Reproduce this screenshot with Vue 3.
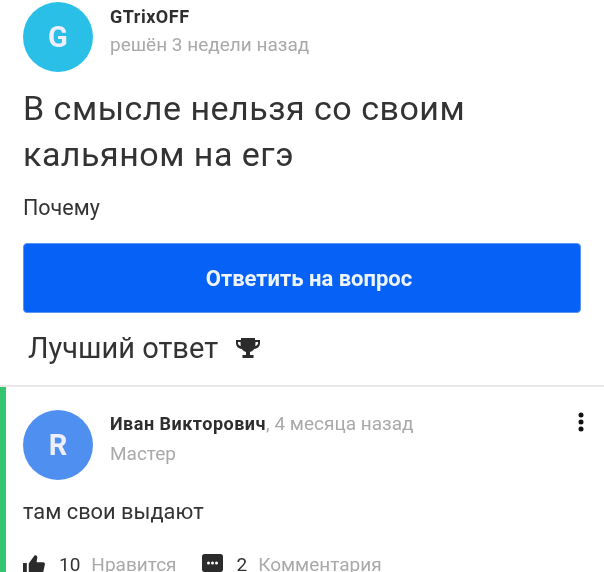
<template>
  <div class="page">
    <section class="question">
      <header class="author">
        <div class="avatar cyan">G</div>
        <div class="meta">
          <div class="name small">GTrixOFF</div>
          <div class="muted">решён 3 недели назад</div>
        </div>
      </header>
      <h1>В смысле нельзя со своим кальяном на егэ</h1>
      <p class="detail">Почему</p>
      <button class="answer-btn">Ответить на вопрос</button>
      <h2>
        Лучший ответ
        <svg class="trophy" width="26" height="22" viewBox="0 0 26 22">
          <path fill="#2b2b2b" d="M6 1h14v2h5v3c0 3-2 5.500-5.800 6-1 1.500-2.700 2.600-4.200 2.900V18h3.500v3h-11v-3H11v-3.100C9.500 14.600 7.800 13.500 6.800 12 3 11.500 1 9 1 6V3h5zM3 5v1c0 1.200.7 2.300 2.800 3C5.600 8 5.500 6.500 5.500 5zm20 0h-2.500c0 1.500-.1 3-.3 4 2.100-.7 2.800-1.800 2.800-3z" />
        </svg>
      </h2>
    </section>

    <section class="best">
      <div class="author">
        <div class="avatar blue">R</div>
        <div class="meta">
          <div class="line"><span class="name">Иван Викторович</span><span class="muted">, 4 месяца назад</span></div>
          <div class="muted rank">Мастер</div>
        </div>
        <svg class="dots" width="8" height="20" viewBox="0 0 8 20">
          <circle v-for="cy in [3, 10, 17]" :key="cy" cx="4" :cy="cy" r="2.500" fill="#111" />
        </svg>
      </div>
      <p class="text">там свои выдают</p>
      <div class="actions">
        <svg class="icon" width="22" height="22" viewBox="0 0 23 22">
          <path fill="#2b2b2b" d="M0 9h4v13H0zM6 9.500 12 1c1.500-.6 3 .3 3 2l-.8 5H21c1.300 0 2.200 1.200 1.900 2.500l-2 9c-.3 1-1 1.500-2 1.500H8c-1.200 0-2-.8-2-2z" />
        </svg>
        <span class="count">10</span>
        <span class="muted action-label">Нравится</span>
        <svg class="icon comment" width="21" height="22" viewBox="0 0 21 22">
          <path fill="#2b2b2b" d="M2.500 0h16C20 0 21 1 21 2.500v13c0 1.500-1 2.500-2.500 2.500H17v4l-5-4H2.500C1 18 0 17 0 15.500v-13C0 1 1 0 2.500 0z" />
          <circle v-for="cx in [6.500, 10.500, 14.500]" :key="cx" :cx="cx" cy="9" r="1.500" fill="#fff" />
        </svg>
        <span class="count">2</span>
        <span class="muted action-label">Комментария</span>
      </div>
    </section>
  </div>
</template>

<script setup>
</script>

<style>
html,
body {
  margin: 0;
  background: #fff;
  overflow: hidden;
}
</style>

<style scoped>
.page {
  width: 604px;
  height: 572px;
  overflow: hidden;
  font-family: Roboto, "Liberation Sans", sans-serif;
  color: #333;
  filter: blur(0.4px);
}

.question {
  padding: 2px 23px 0;
  border-bottom: 2px solid #e8e8e8;
  height: 383px;
}

.author {
  display: flex;
  align-items: flex-start;
  gap: 17px;
}

.avatar {
  width: 70px;
  height: 70px;
  border-radius: 50%;
  flex: none;
  display: flex;
  align-items: center;
  justify-content: center;
  color: #eef;
  font-size: 29px;
  font-weight: 700;
}

.cyan {
  background: #29bfe6;
}

.blue {
  background: #4f8ff0;
}

.meta {
  flex: 1;
  padding-top: 5px;
}

.name {
  font-size: 18px;
  font-weight: 700;
  letter-spacing: 0.5px;
  color: #2e2e2e;
}

.small {
  line-height: 20px;
}

.muted {
  font-size: 19px;
  color: #a9a9a9;
}

.meta > .muted {
  margin-top: 6px;
  line-height: 24px;
}

h1 {
  margin: 13px 0 0;
  width: 480px;
  font-size: 34px;
  font-weight: 400;
  letter-spacing: 0.5px;
  line-height: 46px;
}

.detail {
  margin: 18px 0 0;
  font-size: 21.500px;
  line-height: 26px;
}

.answer-btn {
  display: block;
  width: 100%;
  height: 70px;
  margin-top: 22px;
  padding-left: 20px;
  border: 1px solid #5b93f5;
  border-radius: 4px;
  background: #0662f6;
  color: #eef4ff;
  font: 700 22px Roboto, "Liberation Sans", sans-serif;
}

h2 {
  margin: 16px 0 0 5px;
  display: flex;
  align-items: center;
  gap: 17px;
  font-size: 29px;
  font-weight: 400;
  line-height: 38px;
}

.best {
  border-left: 6px solid #35c46f;
  padding: 23px 19px 0 17px;
  height: 170px;
}

.best .meta {
  padding-top: 2px;
}

.line {
  line-height: 24px;
}

.rank {
  margin-top: 5px !important;
}

.dots {
  margin-top: 2px;
}

.text {
  margin: 19px 0 0;
  font-size: 21.800px;
  line-height: 26px;
}

.actions {
  display: flex;
  align-items: center;
  margin-top: 28px;
  font-size: 19px;
}

.count {
  margin-left: 14px;
}

.action-label {
  margin-left: 11px;
}

.comment {
  margin-left: 25px;
}
</style>
